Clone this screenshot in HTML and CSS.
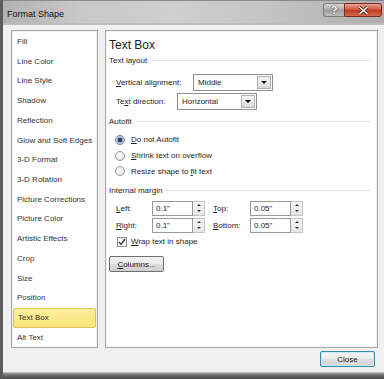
FILE: index.html
```html
<!DOCTYPE html>
<html>
<head>
<meta charset="utf-8">
<link rel="stylesheet" href="styles.css">
</head>
<body>
<div class="window">
  <div class="titlebar">
    <span class="title">Format Shape</span>
    <div class="caption-btns">
      <span class="cap-help">?</span>
      <span class="cap-close"><svg width="11" height="9" viewBox="0 0 11 9"><path d="M1.5 1 L9.5 8 M9.5 1 L1.5 8" stroke="#5a1a10" stroke-width="3"/><path d="M1.5 1 L9.5 8 M9.5 1 L1.5 8" stroke="#fff" stroke-width="1.6"/></svg></span>
    </div>
  </div>
  <div class="client">
    <div class="main">
      <ul class="nav">
        <li>Fill</li>
        <li>Line Color</li>
        <li>Line Style</li>
        <li>Shadow</li>
        <li>Reflection</li>
        <li>Glow and Soft Edges</li>
        <li>3-D Format</li>
        <li>3-D Rotation</li>
        <li>Picture Corrections</li>
        <li>Picture Color</li>
        <li>Artistic Effects</li>
        <li>Crop</li>
        <li>Size</li>
        <li>Position</li>
        <li class="active">Text Box</li>
        <li>Alt Text</li>
      </ul>
      <div class="panel">
        <div class="heading">Text Box</div>
        <div class="group"><span>Text layout</span><i class="rule"></i></div>
        <div class="field row-va">
          <span class="lbl lbl-va"><u>V</u>ertical alignment:</span>
          <span class="select sel-va"><span class="sel-text">Middle</span><span class="sel-btn"><i class="tri"></i></span></span>
        </div>
        <div class="field row-td">
          <span class="lbl lbl-td">Te<u>x</u>t direction:</span>
          <span class="select sel-td"><span class="sel-text">Horizontal</span><span class="sel-btn"><i class="tri"></i></span></span>
        </div>
        <div class="group grp-autofit"><span>Autofit</span><i class="rule"></i></div>
        <div class="radios">
          <div class="radio-row"><span class="radio on"></span><span><u>D</u>o not Autofit</span></div>
          <div class="radio-row"><span class="radio"></span><span><u>S</u>hrink text on overflow</span></div>
          <div class="radio-row"><span class="radio"></span><span>Resize shape to <u>f</u>it text</span></div>
        </div>
        <div class="group grp-margin"><span>Internal margin</span><i class="rule"></i></div>
        <div class="margins">
          <span class="lbl"><u>L</u>eft:</span>
          <span class="input">0.1"</span>
          <span class="spin"><i class="up"></i><i class="dn"></i></span>
          <span class="lbl lbl2"><u>T</u>op:</span>
          <span class="input">0.05"</span>
          <span class="spin"><i class="up"></i><i class="dn"></i></span>
          <span class="lbl"><u>R</u>ight:</span>
          <span class="input">0.1"</span>
          <span class="spin"><i class="up"></i><i class="dn"></i></span>
          <span class="lbl lbl2"><u>B</u>ottom:</span>
          <span class="input">0.05"</span>
          <span class="spin"><i class="up"></i><i class="dn"></i></span>
        </div>
        <div class="check-row">
          <span class="check"><svg width="8" height="8" viewBox="0 0 8 8"><path d="M1 4 L3 6.5 L7 1" fill="none" stroke="#3a3a3a" stroke-width="1.3"/></svg></span>
          <span><u>W</u>rap text in shape</span>
        </div>
        <div class="btn-row"><span class="button btn-columns"><u>C</u>olumns...</span></div>
      </div>
    </div>
    <div class="footer"><span class="button btn-close">Close</span></div>
  </div>
  <div class="frame-bottom"></div>
</div>
</body>
</html>
```
FILE: styles.css
```css
html, body {
  margin: 0;
  padding: 0;
  background: #f0f0f0;
}
body {
  font-family: "Liberation Sans", Arial, sans-serif;
  font-size: 8px;
  color: #1e1e1e;
}
.window {
  width: 384px;
  height: 379px;
  box-sizing: border-box;
  border-left: 3px solid #5c5c5c;
  display: flex;
  flex-direction: column;
  background: #f0f0f0;
  overflow: hidden;
}
.titlebar {
  height: 25px;
  flex: none;
  display: flex;
  align-items: flex-start;
  justify-content: space-between;
  background: linear-gradient(90deg, #b2b2b2 0%, #c8c8c8 20%, #cfcfcf 45%, #c4c4c4 70%, #adadad 100%);
  border-top: 1px solid #8a8a8a;
  box-sizing: border-box;
  position: relative;
}
.titlebar::after {
  content: "";
  position: absolute;
  left: 0; right: 0; bottom: 0;
  height: 2px;
  background: #bdbdbd;
}
.title {
  font-size: 9px;
  color: #111;
  padding-left: 4px;
  line-height: 12px;
  margin-top: 7px;
}
.caption-btns {
  display: flex;
  margin-top: 2px;
  margin-right: 2px;
}
.cap-help {
  width: 21px;
  height: 14px;
  box-sizing: border-box;
  border: 1px solid #7a7a7a;
  border-right: none;
  border-radius: 3px 0 0 3px;
  background: linear-gradient(#d6d6d6, #a9a9a9 50%, #9a9a9a 51%, #bdbdbd);
  color: #fff;
  font-weight: bold;
  font-size: 11px;
  line-height: 12px;
  text-align: center;
  text-shadow: 0 0 1px #333, 0 0 1px #333;
}
.cap-close {
  width: 38px;
  height: 14px;
  box-sizing: border-box;
  border: 1px solid #7a2a1e;
  border-radius: 0 3px 3px 0;
  background: linear-gradient(#e5a496, #d2573f 45%, #c23a22 55%, #d56a4f);
  display: flex;
  align-items: center;
  justify-content: center;
}
.client {
  flex: 1;
  display: flex;
  flex-direction: column;
  padding: 5px 6px 0 8px;
  min-height: 0;
}
.main {
  height: 318px;
  flex: none;
  display: flex;
  gap: 7px;
}
.nav {
  list-style: none;
  margin: 0;
  padding: 1px 0 0 0;
  width: 87px;
  box-sizing: border-box;
  background: #fff;
  border: 1px solid #a8a8a8;
  box-shadow: inset 0 0 0 1px #f4f4f4;
}
.nav li {
  height: 19.72px;
  line-height: 19.72px;
  padding-left: 5px;
  color: #333;
  box-sizing: border-box;
  white-space: nowrap;
}
.nav li.active {
  margin: 0 1px;
  padding-left: 4px;
  border: 1px solid #e0c25a;
  border-radius: 2px;
  line-height: 17.72px;
  background: linear-gradient(#fcee9c, #fbe47a);
}
.panel {
  flex: 1;
  background: #fff;
  border: 1px solid #a8a8a8;
  box-shadow: inset 0 0 0 1px #f4f4f4;
  padding: 6px 7px 0 3px;
  display: flex;
  flex-direction: column;
}
.heading {
  font-size: 12px;
  line-height: 16px;
  height: 16px;
  color: #1a1a1a;
}
.group {
  display: flex;
  align-items: center;
  height: 14px;
  color: #1e1e1e;
}
.group .rule {
  flex: 1;
  height: 1px;
  background: #dfe3e8;
  margin-left: 4px;
}
.field {
  display: flex;
  align-items: center;
  height: 17px;
  padding-left: 7px;
}
.row-va { margin-top: 7px; }
.row-td { margin-top: 2px; }
.lbl-va { width: 77px; }
.lbl-td { width: 61px; }
.select {
  height: 17px;
  box-sizing: border-box;
  border: 1px solid #8f8f8f;
  display: flex;
  align-items: stretch;
  background: #fff;
}
.sel-va { width: 80px; }
.sel-td { width: 80px; }
.sel-text {
  flex: 1;
  padding-left: 4px;
  line-height: 15px;
}
.sel-btn {
  width: 14px;
  margin: 1px;
  box-sizing: border-box;
  border: 1px solid #b0b0b0;
  background: linear-gradient(#f4f4f4, #dcdcdc);
  display: flex;
  align-items: center;
  justify-content: center;
}
.tri {
  width: 0; height: 0;
  border-left: 3px solid transparent;
  border-right: 3px solid transparent;
  border-top: 3px solid #111;
}
.grp-autofit { margin-top: 4px; }
.radios {
  margin-top: 4px;
  padding-left: 6px;
}
.radio-row {
  display: flex;
  align-items: center;
  height: 15.7px;
  gap: 6px;
}
.radio {
  width: 10px;
  height: 10px;
  box-sizing: border-box;
  border-radius: 50%;
  border: 1px solid #9a9a9a;
  background: radial-gradient(circle at 40% 40%, #ffffff, #d8d8d8);
}
.radio.on {
  border-color: #6d7c8c;
  background: radial-gradient(circle, #2a3f57 0 2px, #8ba7c4 2.5px, #dce6ef 4px);
}
.grp-margin { margin-top: 4px; }
.margins {
  margin-top: 3px;
  padding-left: 7px;
  display: grid;
  grid-template-columns: 36px 41px 12px 45px 41px 12px;
  grid-auto-rows: 16px;
  row-gap: 1px;
  align-items: center;
}
.margins .lbl2 { padding-left: 8px; }
.input {
  height: 15px;
  box-sizing: border-box;
  border: 1px solid #9a9a9a;
  background: #fff;
  line-height: 13px;
  padding-left: 3px;
}
.spin {
  height: 15px;
  box-sizing: border-box;
  border: 1px solid #c4c4c4;
  border-left: none;
  background: linear-gradient(#f6f6f6, #e6e6e6);
  display: flex;
  flex-direction: column;
  align-items: center;
  justify-content: space-around;
}
.spin .up, .spin .dn {
  width: 0; height: 0;
  border-left: 2px solid transparent;
  border-right: 2px solid transparent;
}
.spin .up { border-bottom: 2px solid #333; }
.spin .dn { border-top: 2px solid #333; }
.check-row {
  display: flex;
  align-items: center;
  gap: 4px;
  height: 15px;
  padding-left: 8px;
  margin-top: 1px;
}
.check {
  width: 10px;
  height: 10px;
  box-sizing: border-box;
  border: 1px solid #8e8f8f;
  background: linear-gradient(#f2f2f2, #ffffff);
  display: flex;
  align-items: center;
  justify-content: center;
}
.btn-row {
  margin-top: 7px;
  display: flex;
}
.button {
  display: inline-flex;
  align-items: center;
  justify-content: center;
  height: 16px;
  box-sizing: border-box;
  border: 1px solid #707070;
  border-radius: 2px;
  background: linear-gradient(#f3f3f3 0%, #ebebeb 50%, #dddddd 51%, #cfcfcf 100%);
  color: #1a1a1a;
}
.btn-columns { width: 55px; }
.footer {
  display: flex;
  justify-content: flex-end;
  padding-top: 3px;
  padding-right: 3px;
}
.btn-close {
  width: 55px;
  border-color: #3c8aa8;
  box-shadow: inset 0 0 0 1px #c8eaf5;
  background: linear-gradient(#f4f4f4 0%, #ececec 50%, #dfdfdf 51%, #d6d6d6 100%);
}
.frame-bottom {
  height: 7px;
  flex: none;
  margin-top: auto;
  background: linear-gradient(#d8d8d8 0, #a0a0a0 1px, #6c6c6c 3px, #4a4a4a 100%);
}
```
